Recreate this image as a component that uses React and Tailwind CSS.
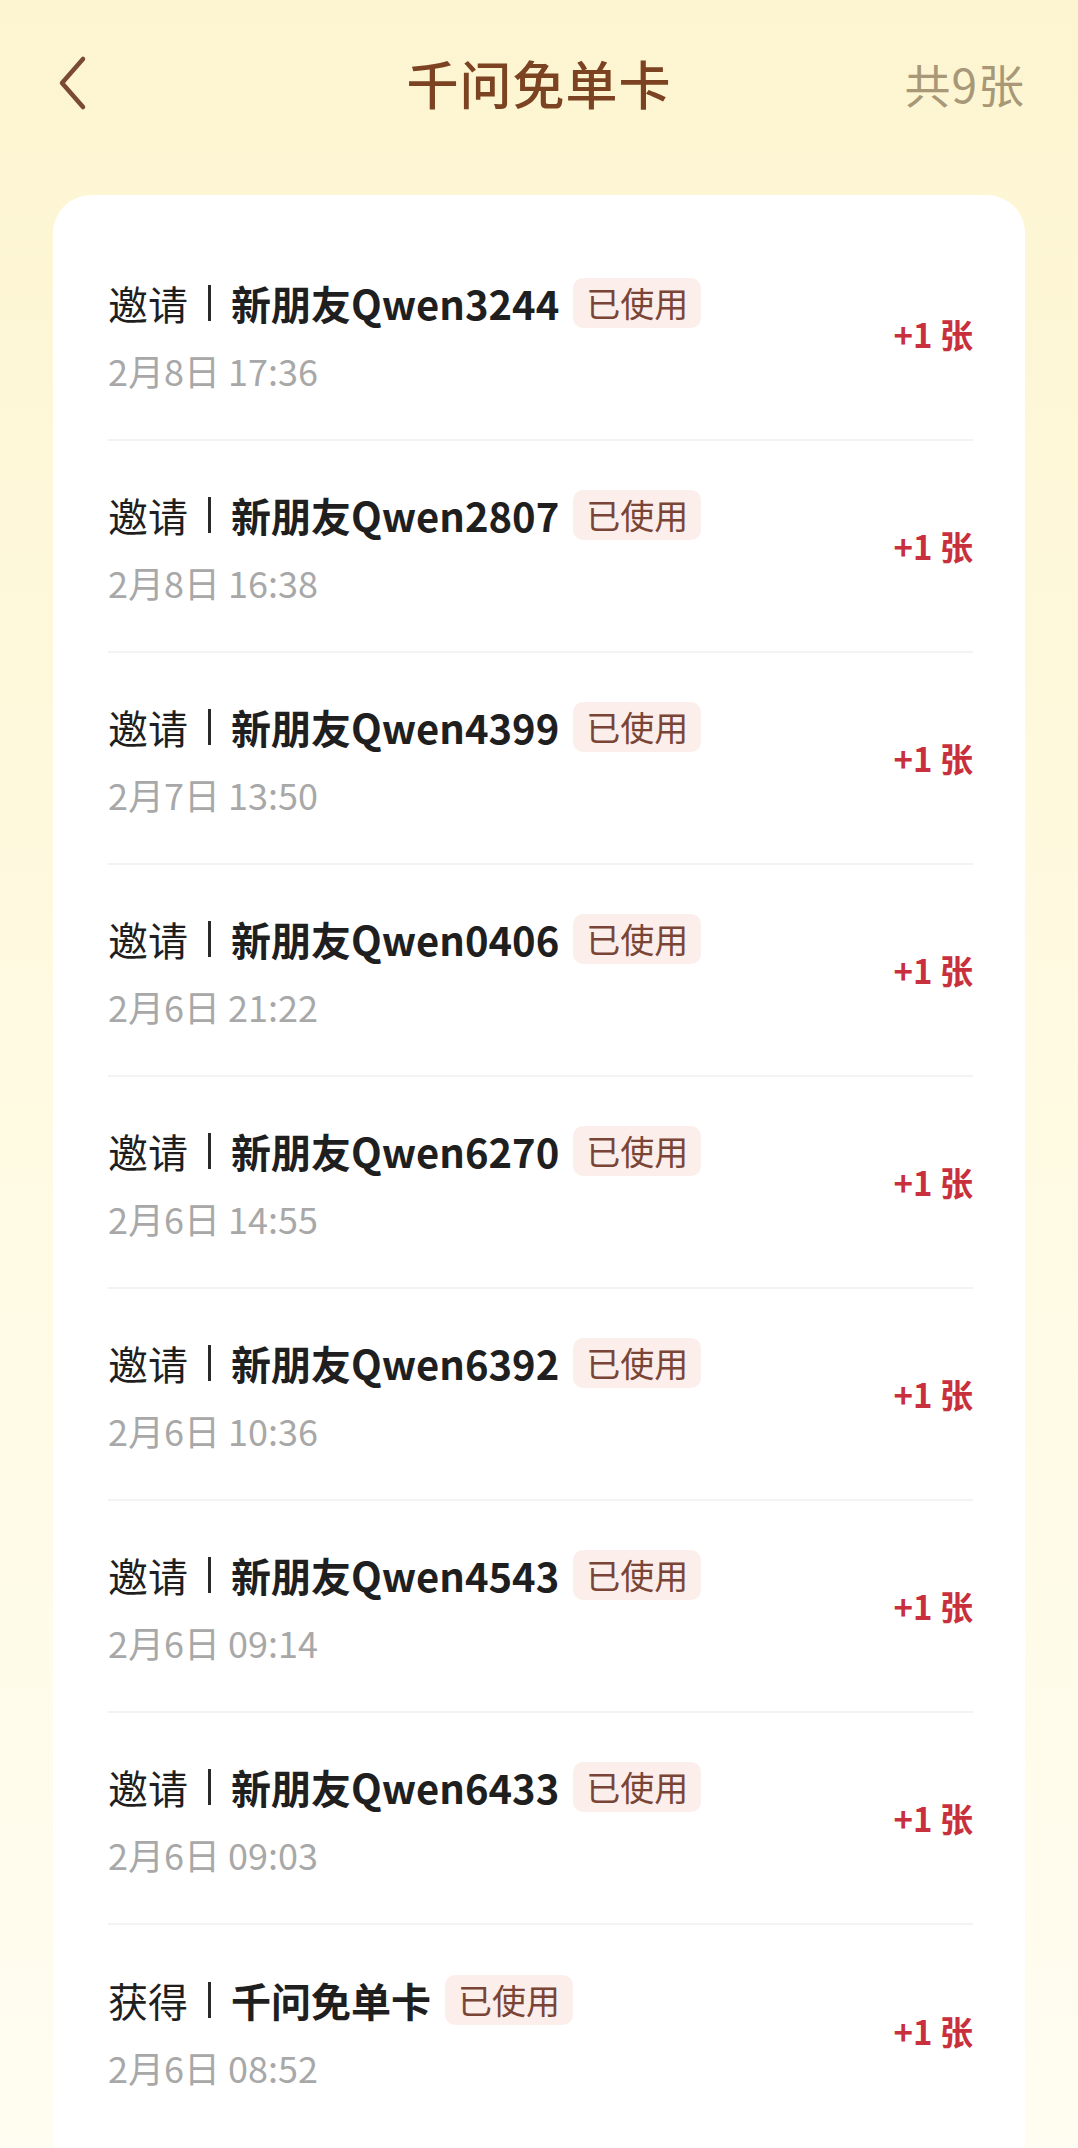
const records = [
  { kind: '邀请', name: '新朋友Qwen3244', time: '2月8日 17:36' },
  { kind: '邀请', name: '新朋友Qwen2807', time: '2月8日 16:38' },
  { kind: '邀请', name: '新朋友Qwen4399', time: '2月7日 13:50' },
  { kind: '邀请', name: '新朋友Qwen0406', time: '2月6日 21:22' },
  { kind: '邀请', name: '新朋友Qwen6270', time: '2月6日 14:55' },
  { kind: '邀请', name: '新朋友Qwen6392', time: '2月6日 10:36' },
  { kind: '邀请', name: '新朋友Qwen4543', time: '2月6日 09:14' },
  { kind: '邀请', name: '新朋友Qwen6433', time: '2月6日 09:03' },
  { kind: '获得', name: '千问免单卡', time: '2月6日 08:52' },
];

const font = { fontFamily: '"Noto Sans CJK SC", "Noto Sans", sans-serif' };

export default function App() {
  return (
    <div
      className="min-h-[2148px] bg-gradient-to-b from-[#fdf5d1] via-[#fffae2] to-[#fffdf2] pb-10"
      style={font}
    >
      {/* Header */}
      <div className="grid h-[166px] grid-cols-[1fr_auto_1fr] items-center">
        <div className="pl-[56px]">
          <svg width="32" height="56" viewBox="0 0 32 56" fill="none">
            <path d="M27 4 L6 28 L27 52" stroke="#7a4a32" strokeWidth="4.5" strokeLinecap="round" strokeLinejoin="round" />
          </svg>
        </div>
        <h1 className="text-[52px] font-medium leading-none tracking-[1px] text-[#7c4322]">千问免单卡</h1>
        <div className="flex justify-end pr-[53px] text-[46px] leading-none tracking-[1px] text-[#a89877]">共9张</div>
      </div>

      {/* List card */}
      <div className="mx-[53px] mt-[29px] rounded-[38px] bg-white pb-10 pl-[55px] pr-[52px] pt-[34px]">
        {records.map((r, i) => (
          <div
            key={i}
            className={`flex h-[212px] items-center justify-between ${i < records.length - 1 ? 'border-b-2 border-[#f3f3f3]' : ''}`}
          >
            <div>
              <div className="flex h-[56px] items-center text-[40px] leading-[56px] text-[#1f1f1f]">
                <span>{r.kind}</span>
                <span className="mx-[20px] inline-block h-[36px] w-[3px] bg-[#2a2a2a]" />
                <span className="font-bold">{r.name}</span>
                <span className="ml-[14px] rounded-[10px] bg-[#fcefeb] px-[13px] text-[34px] leading-[50px] text-[#7a4536]">
                  已使用
                </span>
              </div>
              <div className="mt-[16px] text-[36px] leading-[46px] text-[#a8a8a8]">{r.time}</div>
            </div>
            <div className="text-[33px] font-bold leading-none text-[#c9303e]">+1 张</div>
          </div>
        ))}
      </div>
    </div>
  );
}
